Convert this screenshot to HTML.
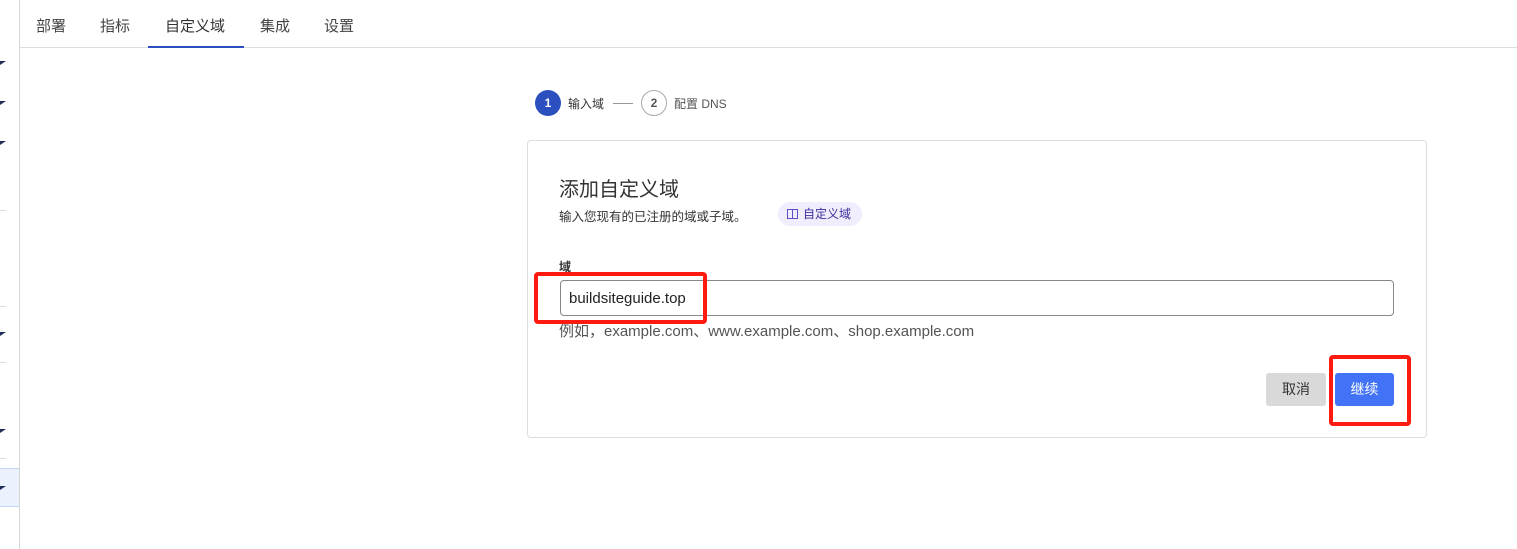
<!DOCTYPE html>
<html><head><meta charset="utf-8"><style>
*{box-sizing:border-box;margin:0;padding:0}
body{width:1517px;height:549px;overflow:hidden;background:#fff;font-family:"Liberation Sans","Noto Sans CJK SC",sans-serif;position:relative;color:#333}
.abs{position:absolute}
.mark{position:absolute;left:0;width:6px;height:4px;background:#1e2d5a;clip-path:polygon(0 0,100% 0,0 100%)}
.hl{position:absolute;left:0;width:6px;height:1px;background:#ddd}
.tab{position:absolute;top:15px;font-size:15px;color:#444}
</style></head><body>
<div class="abs" style="left:19px;top:0;width:1px;height:549px;background:#d6d6d6"></div>
<div class="abs" style="left:0;top:468px;width:19px;height:39px;background:#ebf2fd;border-top:1px solid #c5d6f5;border-bottom:1px solid #c5d6f5"></div>
<div class="mark" style="top:61px"></div><div class="mark" style="top:101px"></div><div class="mark" style="top:141px"></div>
<div class="mark" style="top:332px"></div><div class="mark" style="top:429px"></div><div class="mark" style="top:486px"></div>
<div class="hl" style="top:210px"></div><div class="hl" style="top:306px"></div><div class="hl" style="top:362px"></div><div class="hl" style="top:458px"></div>
<div class="abs" style="left:20px;top:47px;width:1497px;height:1px;background:#ddd"></div>
<div class="tab" style="left:36px">部署</div>
<div class="tab" style="left:100px">指标</div>
<div class="tab" style="left:165px;color:#333">自定义域</div>
<div class="tab" style="left:260px">集成</div>
<div class="tab" style="left:324px">设置</div>
<div class="abs" style="left:148px;top:46px;width:96px;height:2px;background:#2c4fbf"></div>

<div class="abs" style="left:535px;top:90px;width:26px;height:26px;border-radius:50%;background:#2c4fbf;color:#fff;font-size:12px;font-weight:bold;text-align:center;line-height:26px">1</div>
<div class="abs" style="left:568px;top:95px;font-size:12px;color:#333">输入域</div>
<div class="abs" style="left:613px;top:103px;width:20px;height:1px;background:#999"></div>
<div class="abs" style="left:641px;top:90px;width:26px;height:26px;border-radius:50%;border:1px solid #aaa;color:#555;font-size:12px;font-weight:bold;text-align:center;line-height:24px">2</div>
<div class="abs" style="left:674px;top:95px;font-size:12px;color:#555">配置 DNS</div>

<div class="abs" style="left:527px;top:140px;width:900px;height:298px;border:1px solid #ddd;border-radius:4px"></div>
<div class="abs" style="left:559px;top:173px;font-size:20px;color:#333">添加自定义域</div>
<div class="abs" style="left:559px;top:206px;font-size:12.5px;color:#333">输入您现有的已注册的域或子域。</div>
<div class="abs" style="left:778px;top:202px;width:84px;height:24px;border-radius:12px;background:#f0eefc;font-size:12px;color:#3b2e9e;line-height:24px;padding-left:9px">
<svg width="11" height="10" viewBox="0 0 11 10" style="vertical-align:-1px;margin-right:5px"><rect x="0.5" y="0.5" width="10" height="9" fill="none" stroke="#5a4fc9"/><line x1="5.5" y1="0.5" x2="5.5" y2="9.5" stroke="#5a4fc9"/></svg>自定义域</div>
<div class="abs" style="left:559px;top:258px;font-size:12px;font-weight:bold;color:#333">域</div>
<div class="abs" style="left:560px;top:280px;width:834px;height:36px;border:1px solid #888;border-radius:4px;font-size:15px;color:#222;padding:9px 0 0 8px">buildsiteguide.top</div>
<div class="abs" style="left:534px;top:272px;width:173px;height:52px;border:4px solid #ff1a10;border-radius:4px"></div>
<div class="abs" style="left:559px;top:320px;font-size:15px;color:#555">例如，example.com、www.example.com、shop.example.com</div>
<div class="abs" style="left:1266px;top:373px;width:60px;height:33px;background:#d9d9d9;border-radius:3px;font-size:14px;text-align:center;line-height:33px;color:#333">取消</div>
<div class="abs" style="left:1335px;top:373px;width:59px;height:33px;background:#4272f5;border-radius:3px;font-size:14px;text-align:center;line-height:33px;color:#fff">继续</div>
<div class="abs" style="left:1329px;top:355px;width:82px;height:71px;border:4px solid #ff1a10;border-radius:4px"></div>
</body></html>
